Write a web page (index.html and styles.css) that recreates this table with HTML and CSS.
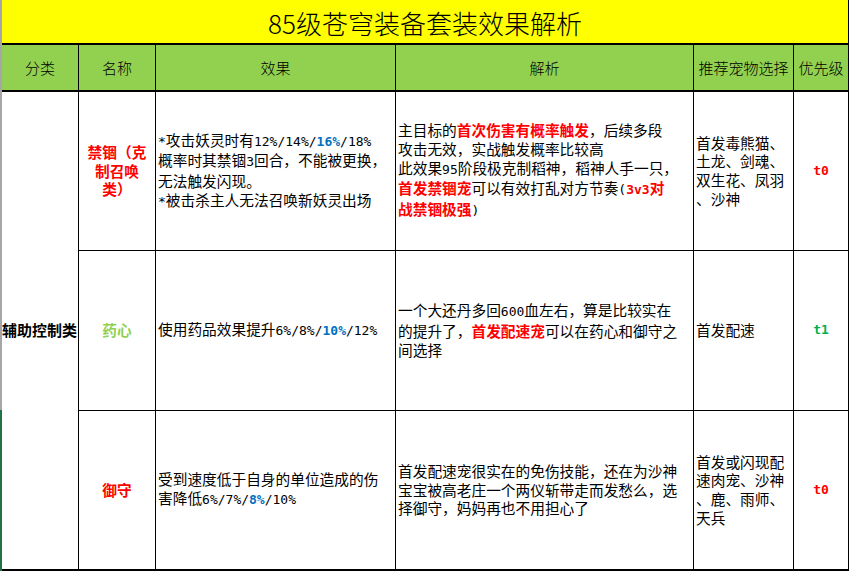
FILE: index.html
```html
<!DOCTYPE html>
<html lang="zh-CN">
<head>
<meta charset="utf-8">
<title>85级苍穹装备套装效果解析</title>
<link rel="stylesheet" href="styles.css">
</head>
<body>
<div class="sheet">
  <div class="edge"></div>
  <div class="table">
    <div class="title">85级苍穹装备套装效果解析</div>
    <div class="hd">分类</div>
    <div class="hd">名称</div>
    <div class="hd">效果</div>
    <div class="hd">解析</div>
    <div class="hd">推荐宠物选择</div>
    <div class="hd">优先级</div>

    <div class="cell cat"><div class="txt">辅助控制类</div></div>

    <div class="cell c"><div class="txt red">禁锢（克<br>制召唤<br>类）</div></div>
    <div class="cell"><div class="txt"><span class="n">*</span>攻击妖灵时有<span class="n">12%/14%/</span><span class="n blue">16%</span><span class="n">/18%</span><br>概率时其禁锢<span class="n">3</span>回合，不能被更换，<br>无法触发闪现。<br><span class="n">*</span>被击杀主人无法召唤新妖灵出场</div></div>
    <div class="cell"><div class="txt">主目标的<span class="red">首次伤害有概率触发</span>，后续多段<br>攻击无效，实战触发概率比较高<br>此效果<span class="n">95</span>阶段极克制稻神，稻神人手一只，<br><span class="red">首发禁锢宠</span>可以有效打乱对方节奏<span class="n">(</span><span class="red"><span class="n">3v3</span>对</span><br><span class="red">战禁锢极强</span><span class="n">)</span></div></div>
    <div class="cell"><div class="txt">首发毒熊猫、<br>土龙、剑魂、<br>双生花、凤羽<br>、沙神</div></div>
    <div class="cell c"><div class="txt n red">t0</div></div>

    <div class="cell c"><div class="txt lg">药心</div></div>
    <div class="cell"><div class="txt">使用药品效果提升<span class="n">6%/8%/</span><span class="n blue">10%</span><span class="n">/12%</span></div></div>
    <div class="cell"><div class="txt">一个大还丹多回<span class="n">600</span>血左右，算是比较实在<br>的提升了，<span class="red">首发配速宠</span>可以在药心和御守之<br>间选择</div></div>
    <div class="cell"><div class="txt">首发配速</div></div>
    <div class="cell c"><div class="txt n green">t1</div></div>

    <div class="cell c"><div class="txt red">御守</div></div>
    <div class="cell"><div class="txt">受到速度低于自身的单位造成的伤<br>害降低<span class="n">6%/7%/</span><span class="n blue">8%</span><span class="n">/10%</span></div></div>
    <div class="cell"><div class="txt">首发配速宠很实在的免伤技能，还在为沙神<br>宝宝被高老庄一个两仪斩带走而发愁么，选<br>择御守，妈妈再也不用担心了</div></div>
    <div class="cell"><div class="txt">首发或闪现配<br>速肉宠、沙神<br>、鹿、雨师、<br>天兵</div></div>
    <div class="cell c"><div class="txt n red">t0</div></div>
  </div>
</div>
</body>
</html>
```

FILE: styles.css
```css
html, body {
  margin: 0;
  padding: 0;
  background: #fff;
}

body {
  font-family: "Noto Sans CJK SC", sans-serif;
  color: #000;
}

.sheet {
  display: flex;
  width: 851px;
  height: 571px;
  overflow: hidden;
}

.edge {
  flex: none;
  width: 2px;
  background: linear-gradient(to bottom, #a6a6a6 0, #a6a6a6 410px, #217346 410px, #217346 100%);
}

.table {
  display: grid;
  grid-template-columns: 76px 76px 239px 297px 99px 54px;
  grid-template-rows: 44px 46px 158px 159px 158px;
  gap: 1px;
  background: #000;
  border-right: 1px solid #000;
  border-bottom: 2px solid #000;
  align-self: flex-start;
}

.title {
  grid-column: 1 / -1;
  box-sizing: border-box;
  background: #ffff00;
  border-bottom: 1px solid #000;
  display: flex;
  align-items: center;
  justify-content: center;
  padding-top: 2px;
  font-size: 26px;
  font-weight: 300;
  line-height: 1;
}

.hd {
  box-sizing: border-box;
  background: #92d050;
  border-bottom: 1px solid #000;
  display: flex;
  align-items: center;
  justify-content: center;
  font-size: 15px;
  font-weight: 300;
  line-height: 1;
  white-space: nowrap;
}

.cell {
  background: #fff;
  display: flex;
  align-items: center;
  padding: 0 2px;
  font-size: 14.7px;
  line-height: 18.75px;
  white-space: nowrap;
  overflow: hidden;
}

.cell.c {
  justify-content: center;
  text-align: center;
}

.cat {
  grid-row: span 3;
  padding: 0;
  font-size: 15px;
  font-weight: 700;
}

.n {
  font-family: "DejaVu Sans Mono", monospace;
  font-size: 13px;
}

.red {
  color: #ff0000;
  font-weight: 700;
}

.blue {
  color: #0070c0;
  font-weight: 700;
}

.lg {
  color: #92d050;
  font-weight: 700;
}

.green {
  color: #00b050;
  font-weight: 700;
}
```
